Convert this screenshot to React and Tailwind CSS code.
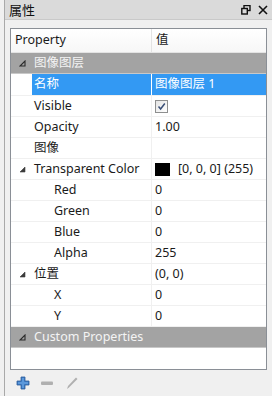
import React from "react";

const font = { fontFamily: '"Noto Sans", "Open Sans", "Noto Sans CJK SC", sans-serif' };

function Tri() {
  return (
    <svg width="7" height="7" viewBox="0 0 7 7" className="shrink-0">
      <path d="M6 1 L6 6 L1 6 Z" fill="#3c3c3c" stroke="#3c3c3c" strokeWidth="0.6" />
    </svg>
  );
}

function Row({ left, value, indent = 0, tri = false }) {
  return (
    <div className="flex h-[21px] border-b border-[#f0f0f0]">
      <div className="w-[21px] shrink-0 flex items-center justify-center pl-[1px]">
        {tri && <Tri />}
      </div>
      <div
        className={`w-[120px] shrink-0 flex items-center text-[12.5px] text-[#1a1a1a] border-r border-[#f0f0f0] ${indent ? "pl-[22px]" : "pl-[2px]"}`}
      >
        {left}
      </div>
      <div className="flex-1 flex items-center pl-[3px] text-[12.5px] text-[#1a1a1a]">{value}</div>
    </div>
  );
}

function GroupRow({ label }) {
  return (
    <div className="flex h-[21px] bg-[#a3a3a3] border-b border-[#c8c8c8]">
      <div className="w-[21px] shrink-0 flex items-center justify-center pl-[1px]">
        <svg width="7" height="7" viewBox="0 0 7 7">
          <path d="M6 1 L6 6 L1 6 Z" fill="none" stroke="#2a2a2a" strokeWidth="1.1" />
        </svg>
      </div>
      <div className="flex items-center pl-[2px] text-[12.5px] text-[#f4f4f4]">{label}</div>
    </div>
  );
}

export default function App() {
  return (
    <div className="w-[272px] h-[396px] bg-[#f0f0f0] relative overflow-hidden" style={font}>
      <div className="ml-[4px] h-full border-l border-[#a9a9a9] flex flex-col">
        {/* title bar */}
        <div className="h-[20px] shrink-0 bg-[#dadada] flex items-center pl-[4px] pr-[3px] border-b border-[#c9c9c9]">
          <span className="text-[13px] text-[#111]" style={{ fontFamily: '"Noto Sans CJK SC", sans-serif' }}>属性</span>
          <div className="flex-1" />
          <svg width="10" height="10" viewBox="0 0 10 10" className="mr-[7px]">
            <rect x="3" y="0.5" width="6" height="5" fill="none" stroke="#111" strokeWidth="1.4" />
            <rect x="0.8" y="3.5" width="5.5" height="5.5" fill="#dadada" stroke="#111" strokeWidth="1.4" />
          </svg>
          <svg width="10" height="10" viewBox="0 0 10 10" className="mr-[1px]">
            <path d="M1 1 L9 9 M9 1 L1 9" stroke="#111" strokeWidth="1.6" />
          </svg>
        </div>
        {/* table */}
        <div className="mt-[8px] ml-[5px] w-[257px] h-[342px] shrink-0 border border-[#8a8f96] bg-white flex flex-col">
          <div className="flex h-[24px] shrink-0 border-b border-[#e3e3e3] bg-gradient-to-b from-white to-[#f7f7f7]">
            <div className="w-[141px] shrink-0 flex items-center pl-[4px] text-[12.5px] text-[#1a1a1a] border-r border-[#e3e3e3]">
              Property
            </div>
            <div className="flex-1 flex items-center pl-[4px] text-[12.5px] text-[#1a1a1a]">值</div>
          </div>
          <GroupRow label="图像图层" />
          {/* selected row */}
          <div className="flex h-[22px] shrink-0 border-b border-[#f0f0f0]">
            <div className="w-[21px] shrink-0" />
            <div className="w-[120px] shrink-0 bg-[#3399f3] flex items-center pl-[2px] text-[12.5px] text-white border-r border-white">
              名称
            </div>
            <div className="flex-1 bg-[#3399f3] flex items-center pl-[3px] text-[12.5px] text-white">图像图层 1</div>
          </div>
          <Row
            left="Visible"
            value={
              <div className="w-[13px] h-[13px] border border-[#8e8f8f] bg-gradient-to-br from-[#e4e4e4] to-white flex items-center justify-center">
                <svg width="9" height="9" viewBox="0 0 9 9">
                  <path d="M1.5 4.5 L3.6 7 L7.8 1.5" fill="none" stroke="#3a4f77" strokeWidth="1.5" />
                </svg>
              </div>
            }
          />
          <Row left="Opacity" value="1.00" />
          <Row left="图像" value="" />
          <Row
            left="Transparent Color"
            tri
            value={
              <div className="flex items-center">
                <div className="w-[15px] h-[13px] bg-black mr-[8px]" />
                <span>[0, 0, 0] (255)</span>
              </div>
            }
          />
          <Row left="Red" value="0" indent />
          <Row left="Green" value="0" indent />
          <Row left="Blue" value="0" indent />
          <Row left="Alpha" value="255" indent />
          <Row left="位置" value="(0, 0)" tri />
          <Row left="X" value="0" indent />
          <Row left="Y" value="0" indent />
          <GroupRow label="Custom Properties" />
        </div>
        {/* toolbar */}
        <div className="flex items-center h-[27px] pl-[11px] gap-[10px]">
          <svg width="14" height="14" viewBox="0 0 14 14">
            <path d="M5 1 H9 V5 H13 V9 H9 V13 H5 V9 H1 V5 H5 Z" fill="#3f7cc4" stroke="#2d5e9c" strokeWidth="0.8" />
            <path d="M6 2 H8 V6 H12 V8 H8 V12 H6 V8 H2 V6 H6 Z" fill="#5b98db" />
          </svg>
          <svg width="14" height="14" viewBox="0 0 14 14">
            <rect x="1" y="5.5" width="12" height="3.5" rx="1" fill="#b0b0b0" />
          </svg>
          <svg width="14" height="14" viewBox="0 0 14 14" className="ml-[1px]">
            <path d="M2 13 L3 10 L11 1.5 L12.5 3 L4 11.5 Z" fill="#b0b0b0" />
          </svg>
        </div>
      </div>
    </div>
  );
}
